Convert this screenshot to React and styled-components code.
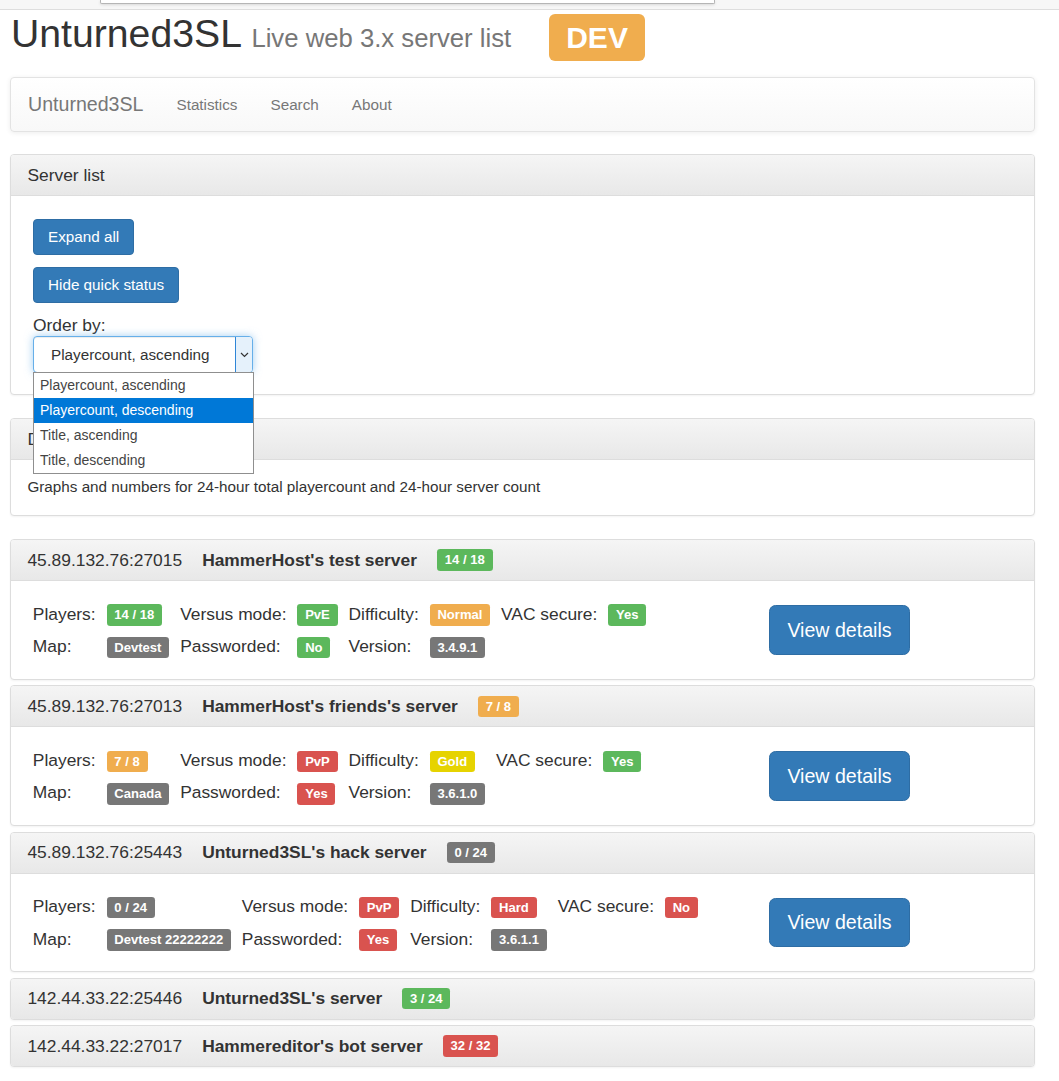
import React from 'react'
import styled, { createGlobalStyle } from 'styled-components'

const GlobalStyle = createGlobalStyle`
  body {
    margin: 0;
    background: #fff;
    color: #333;
    font-family: "Liberation Sans", Arial, Helvetica, sans-serif;
  }
`

const TONES = {
  success: '#5cb85c',
  warning: '#f0ad4e',
  danger: '#d9534f',
  default: '#777',
  gold: '#e6d300',
}

const TopStrip = styled.div`
  display: flex;
  height: 10px;
  box-sizing: border-box;
  background: #f7f7f7;
  border-bottom: 1px solid #dedede;
`

const AddressBox = styled.div`
  margin-left: 100px;
  width: 615px;
  height: 4px;
  box-sizing: border-box;
  background: #fff;
  border: 1px solid #b5b5b5;
  border-top: none;
  border-radius: 0 0 2px 2px;
  box-shadow: 0 1px 3px rgba(0,0,0,0.12);
`

const Page = styled.div`
  margin-left: 10px;
  width: 1025px;
  padding-bottom: 14px;
`

const Header = styled.div`
  display: flex;
  align-items: flex-start;
`

const Title = styled.h1`
  margin: 2px 0 0 1px;
  font-size: 39.2px;
  font-weight: normal;
  line-height: 44px;
  color: #333;
  white-space: nowrap;
`

const Subtitle = styled.small`
  font-size: 25.7px;
  color: #777;
`

const DevBadge = styled.div`
  margin: 4px 0 0 38px;
  height: 47px;
  line-height: 47px;
  padding: 0 17px;
  border-radius: 6px;
  background: #f0ad4e;
  color: #fff;
  font-size: 30px;
  font-weight: bold;
`

const Navbar = styled.nav`
  margin-top: 16px;
  height: 55px;
  box-sizing: border-box;
  display: flex;
  align-items: center;
  gap: 33px;
  padding-left: 17px;
  background: linear-gradient(#fff, #f8f8f8);
  border: 1px solid #e3e3e3;
  border-radius: 4px;
  box-shadow: 0 1px 5px rgba(0,0,0,0.075);
`

const Brand = styled.span`
  font-size: 19.6px;
  color: #777;
`

const NavLink = styled.span`
  font-size: 15.25px;
  color: #777;
`

const Panel = styled.div`
  margin-top: ${props => props.gap}px;
  background: #fff;
  border: 1px solid #ddd;
  border-radius: 4px;
  box-shadow: 0 1px 2px rgba(0,0,0,0.05);
`

const PanelHeading = styled.div`
  height: 40px;
  display: flex;
  align-items: center;
  gap: 20px;
  padding: 0 16.4px;
  background: linear-gradient(#f5f5f5, #e8e8e8);
  border-radius: ${props => props.open ? '3px 3px 0 0' : '3px'};
  border-bottom: ${props => props.open ? '1px solid #ddd' : 'none'};
  font-size: 17.4px;
  color: #333;
  white-space: nowrap;
`

const ServerName = styled.span`
  font-weight: bold;
`

const ControlsBody = styled.div`
  display: flex;
  flex-direction: column;
  align-items: flex-start;
  padding: 23px 22px 21px;
`

const Button = styled.button`
  font-family: inherit;
  font-size: ${props => props.large ? '19.6px' : '15.25px'};
  line-height: ${props => props.large ? '26px' : '20px'};
  padding: ${props => props.large ? '10.9px 17.4px' : '7px 14px'};
  border-radius: ${props => props.large ? '6.5px' : '4px'};
  margin-bottom: ${props => props.mb || 0}px;
  color: #fff;
  background: #337ab7;
  border: 1px solid #2e6da4;
  cursor: pointer;
  justify-self: start;
`

const OrderLabel = styled.label`
  margin-top: -1px;
  font-size: 17.4px;
  line-height: 22px;
`

const SelectWrap = styled.div`
  position: relative;
  width: 220px;
`

const Select = styled.div`
  height: 37px;
  box-sizing: border-box;
  display: flex;
  align-items: stretch;
  border: 1px solid #66afe9;
  border-radius: 4px;
  box-shadow: inset 0 1px 1px rgba(0,0,0,0.075), 0 0 8px rgba(102,175,233,0.6);
  background: #fff;
`

const SelectText = styled.span`
  flex: 1;
  display: flex;
  align-items: center;
  padding-left: 17px;
  font-size: 15.25px;
  color: #333;
`

const SelectArrow = styled.span`
  width: 16px;
  display: flex;
  align-items: center;
  justify-content: center;
  background: #e5f1fb;
  border-left: 1px solid #2f86d7;
  border-radius: 0 3px 3px 0;
`

const Menu = styled.ul`
  position: absolute;
  top: 36px;
  left: 0;
  width: 221px;
  box-sizing: border-box;
  margin: 0;
  padding: 0;
  list-style: none;
  background: #fff;
  border: 1px solid #8f8f8f;
  z-index: 5;
`

const MenuItem = styled.li`
  height: 25px;
  line-height: 25px;
  padding-left: 6px;
  font-size: 14px;
  color: ${props => props.active ? '#fff' : '#444'};
  background: ${props => props.active ? '#0078d7' : 'transparent'};
`

const TextBody = styled.div`
  padding: 16.4px;
  font-size: 15.25px;
  line-height: 21.8px;
`

const PanelGroup = styled.div`
  margin-top: 23.5px;
`

const ServerBody = styled.div`
  display: grid;
  grid-template-columns: 741.6px auto;
  align-items: center;
  padding: 16.4px;
`

const InfoTable = styled.table`
  justify-self: start;
  border-collapse: collapse;
  font-size: 17.4px;
`

const Cell = styled.td`
  padding: 4px 5.45px;
  line-height: 24px;
  white-space: nowrap;
  vertical-align: middle;
`

const Badge = styled.span`
  display: inline-block;
  padding: 3px 7.8px 3.5px;
  font-size: 13.05px;
  line-height: 15px;
  font-weight: bold;
  color: #fff;
  border-radius: 3.3px;
  background: ${props => TONES[props.tone]};
  vertical-align: ${props => props.inHeading ? 'middle' : 'baseline'};
  white-space: nowrap;
`

const servers = [
  {
    ip: '45.89.132.76:27015',
    name: "HammerHost's test server",
    count: ['14 / 18', 'success'],
    rows: [
      [['Players:', '14 / 18', 'success'], ['Versus mode:', 'PvE', 'success'], ['Difficulty:', 'Normal', 'warning'], ['VAC secure:', 'Yes', 'success']],
      [['Map:', 'Devtest', 'default'], ['Passworded:', 'No', 'success'], ['Version:', '3.4.9.1', 'default']],
    ],
  },
  {
    ip: '45.89.132.76:27013',
    name: "HammerHost's friends's server",
    count: ['7 / 8', 'warning'],
    rows: [
      [['Players:', '7 / 8', 'warning'], ['Versus mode:', 'PvP', 'danger'], ['Difficulty:', 'Gold', 'gold'], ['VAC secure:', 'Yes', 'success']],
      [['Map:', 'Canada', 'default'], ['Passworded:', 'Yes', 'danger'], ['Version:', '3.6.1.0', 'default']],
    ],
  },
  {
    ip: '45.89.132.76:25443',
    name: "Unturned3SL's hack server",
    count: ['0 / 24', 'default'],
    rows: [
      [['Players:', '0 / 24', 'default'], ['Versus mode:', 'PvP', 'danger'], ['Difficulty:', 'Hard', 'danger'], ['VAC secure:', 'No', 'danger']],
      [['Map:', 'Devtest 22222222', 'default'], ['Passworded:', 'Yes', 'danger'], ['Version:', '3.6.1.1', 'default']],
    ],
  },
  {
    ip: '142.44.33.22:25446',
    name: "Unturned3SL's server",
    count: ['3 / 24', 'success'],
  },
  {
    ip: '142.44.33.22:27017',
    name: "Hammereditor's bot server",
    count: ['32 / 32', 'danger'],
  },
]

const orderOptions = [
  'Playercount, ascending',
  'Playercount, descending',
  'Title, ascending',
  'Title, descending',
]

const ServerPanel = ({server, first}) => {
  const open = !!server.rows
  return (
    <Panel gap={first ? 0 : 5.45}>
      <PanelHeading open={open}>
        <span>{server.ip}</span>
        <ServerName>{server.name}</ServerName>
        <Badge tone={server.count[1]} inHeading>{server.count[0]}</Badge>
      </PanelHeading>
      {open &&
        <ServerBody>
          <InfoTable>
            <tbody>
              {server.rows.map((row, i) => (
                <tr key={i}>
                  {row.map(([label, value, tone]) => (
                    <React.Fragment key={label}>
                      <Cell>{label}</Cell>
                      <Cell><Badge tone={tone}>{value}</Badge></Cell>
                    </React.Fragment>
                  ))}
                </tr>
              ))}
            </tbody>
          </InfoTable>
          <Button large>View details</Button>
        </ServerBody>
      }
    </Panel>
  )
}

const App = () => {
  return (
    <>
      <GlobalStyle/>
      <TopStrip>
        <AddressBox/>
      </TopStrip>
      <Page>
        <Header>
          <Title>Unturned3SL <Subtitle>Live web 3.x server list</Subtitle></Title>
          <DevBadge>DEV</DevBadge>
        </Header>

        <Navbar>
          <Brand>Unturned3SL</Brand>
          <NavLink>Statistics</NavLink>
          <NavLink>Search</NavLink>
          <NavLink>About</NavLink>
        </Navbar>

        <Panel gap={22}>
          <PanelHeading open>Server list</PanelHeading>
          <ControlsBody>
            <Button mb={12}>Expand all</Button>
            <Button mb={12}>Hide quick status</Button>
            <OrderLabel>Order by:</OrderLabel>
            <SelectWrap>
              <Select>
                <SelectText>Playercount, ascending</SelectText>
                <SelectArrow>
                  <svg width="9" height="6" viewBox="0 0 9 6">
                    <polyline points="1,1 4.5,4.5 8,1" fill="none" stroke="#333" strokeWidth="1.2"/>
                  </svg>
                </SelectArrow>
              </Select>
              <Menu>
                {orderOptions.map((option, i) => (
                  <MenuItem key={option} active={i === 1}>{option}</MenuItem>
                ))}
              </Menu>
            </SelectWrap>
          </ControlsBody>
        </Panel>

        <Panel gap={23}>
          <PanelHeading open>Daily statistics</PanelHeading>
          <TextBody>Graphs and numbers for 24-hour total playercount and 24-hour server count</TextBody>
        </Panel>

        <PanelGroup>
          {servers.map((server, i) => (
            <ServerPanel key={server.ip} server={server} first={i === 0}/>
          ))}
        </PanelGroup>
      </Page>
    </>
  )
}

export default App
